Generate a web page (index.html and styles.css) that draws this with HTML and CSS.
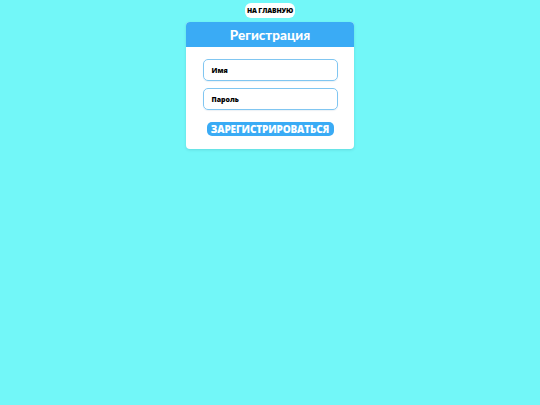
FILE: index.html
```html
<!DOCTYPE html>
<html lang="ru">
<head>
<meta charset="utf-8">
<title>Регистрация</title>
<link rel="stylesheet" href="styles.css">
</head>
<body>
<div class="top">
  <a class="home" href="#">НА ГЛАВНУЮ</a>
</div>
<div class="card">
  <div class="card-head">Регистрация</div>
  <form class="form">
    <div class="field">Имя</div>
    <div class="field">Пароль</div>
    <button class="submit" type="button">ЗАРЕГИСТРИРОВАТЬСЯ</button>
  </form>
</div>
</body>
</html>
```
FILE: styles.css
```css
html, body {
  margin: 0;
  padding: 0;
}
body {
  background: #72f7f8;
  font-family: "Open Sans", "DejaVu Sans", sans-serif;
  font-weight: 700;
  min-height: 405px;
}
.top {
  display: flex;
  justify-content: center;
  padding-top: 3px;
}
.home {
  display: flex;
  align-items: center;
  justify-content: center;
  width: 50px;
  height: 15px;
  background: #fff;
  border-radius: 6px;
  color: #000;
  text-decoration: none;
  font-size: 6.8px;
  font-weight: 800;
  letter-spacing: -0.15px;
}
.card {
  width: 168px;
  margin: 4px auto 0;
  background: #fff;
  border-radius: 4px;
  overflow: hidden;
  box-shadow: 0 1px 3px rgba(0, 60, 80, 0.15);
}
.card-head {
  height: 25px;
  background: #3aabf5;
  color: #fff;
  font-family: Lato, "Open Sans", sans-serif;
  font-weight: 900;
  font-size: 13.5px;
  display: flex;
  align-items: center;
  justify-content: center;
}
.form {
  display: flex;
  flex-direction: column;
  align-items: center;
  padding: 12px 0 13px;
}
.field {
  box-sizing: border-box;
  width: 135px;
  height: 22px;
  border: 1.5px solid #80c6f1;
  border-radius: 5px;
  padding-left: 8px;
  display: flex;
  align-items: center;
  font-size: 7px;
  font-weight: 800;
  color: #000;
  margin-bottom: 7px;
  box-shadow: 0 1px 1px rgba(0, 80, 140, 0.08);
}
.field:last-of-type {
  margin-bottom: 0;
}
.submit {
  margin-top: 12px;
  width: 127px;
  height: 14px;
  border: none;
  border-radius: 5px;
  background: #3aabf5;
  color: #fff;
  font-family: inherit;
  font-weight: 800;
  font-size: 10px;
  padding: 0;
  display: flex;
  align-items: center;
  justify-content: center;
  letter-spacing: -0.15px;
}
```
